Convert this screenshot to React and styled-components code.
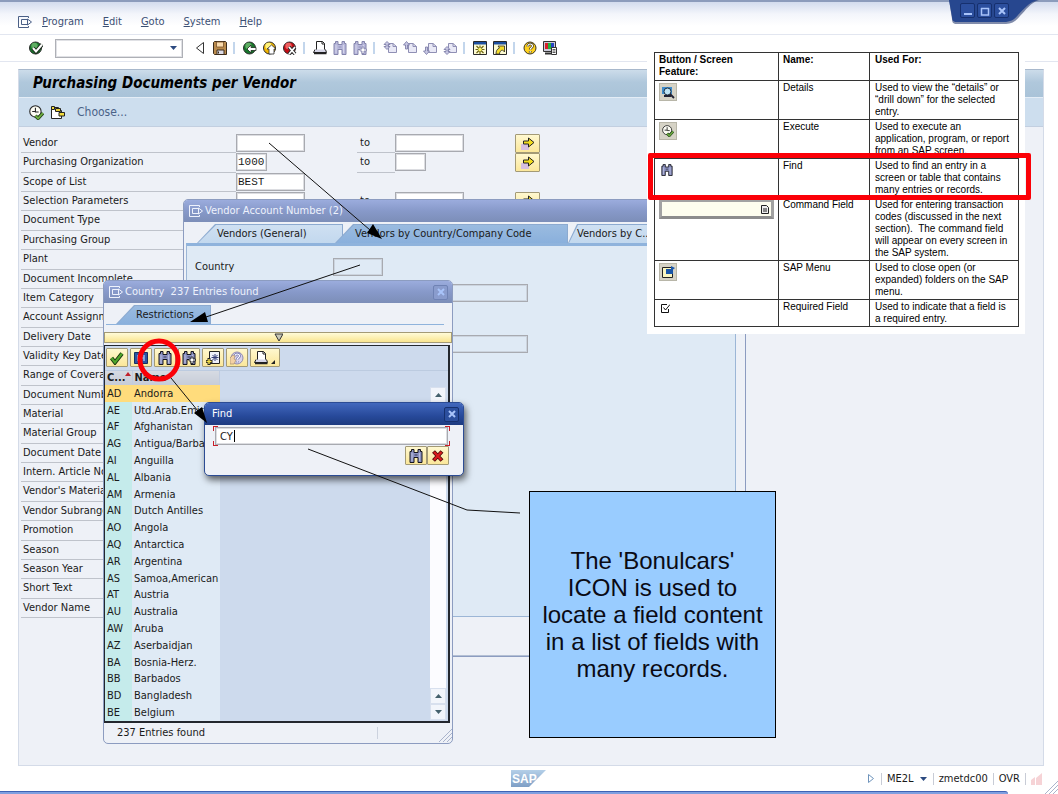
import React from "react";
import styled, { createGlobalStyle, css } from "styled-components";

const GlobalStyle = createGlobalStyle`
  * {
    box-sizing: border-box;
  }
  body {
    margin: 0;
    background: white;
    color: #1a1a1a;
    font-family: "DejaVu Sans Condensed", "DejaVu Sans", sans-serif;
    font-size: 11px;
    line-height: 16px;
  }
  button, input, select {
    font-family: inherit;
    font-size: inherit;
    color: inherit;
  }
`

/* ---------- icons ---------- */

const Icon = ({ size = 14, children }) => (
  <svg width={size} height={size} viewBox="0 0 14 14" aria-hidden="true">{children}</svg>
)

const Binoculars = ({ fill = "#8d93c4", line = "#15151c", plus = false, size }) => (
  <Icon size={size}>
    <path d="M2.500 .5h2.500v3h4v-3h2.500v2h1.500v11h-4v-5h-4v5h-4v-11h1.500z" fill={fill} stroke={line} />
    <path d="M3 4v8M10.500 4v8" stroke="#ffffff" strokeOpacity=".4" />
    <path d="M5.500 6h3" stroke={line} strokeOpacity=".7" />
    {plus && <path d="M9 6h2v2h2.500v2H11v2.500H9V10H7V8h2z" fill="white" stroke={line} strokeWidth=".8" />}
  </Icon>
)

const Ball = ({ light, dark, children }) => (
  <Icon>
    <circle cx="6.500" cy="7" r="6" fill={dark} stroke="#2b2b2b" />
    <circle cx="5.500" cy="5" r="3.200" fill={light} />
    {children}
  </Icon>
)

const OkIcon = () => (
  <Ball light="#5fae63" dark="#16762a">
    <path d="M4 7l3 3.500 6-7" fill="none" stroke="#1c2a1c" strokeWidth="4" />
    <path d="M4 7l3 3.500 6-7" fill="none" stroke="white" strokeWidth="2" />
  </Ball>
)

const BackIcon = () => (
  <Ball light="#5fae63" dark="#16762a">
    <path d="M4 8l4-4v2.500h5v3H8V12z" fill="white" stroke="#1c2a1c" strokeWidth=".8" />
  </Ball>
)

const ExitIcon = () => (
  <Ball light="#fff27a" dark="#f0b400">
    <path d="M8.500 4l4.500 4h-2v5H6V8H4z" fill="white" stroke="#2b2b2b" strokeWidth=".8" />
  </Ball>
)

const CancelIcon = () => (
  <Ball light="#f06060" dark="#c40c14">
    <path d="M6 6l6 7M12 6l-6 7" stroke="#2b2b2b" strokeWidth="3.500" />
    <path d="M6 6l6 7M12 6l-6 7" stroke="white" strokeWidth="1.800" />
  </Ball>
)

const HelpIcon = ({ pale = false }) => (
  <Icon>
    <circle cx="7" cy="7" r="6" fill={pale ? "#d9d2ea" : "#ffd21e"} stroke={pale ? "#8f8bb0" : "#3a3320"} />
    <path d="M4.800 5.500c0-3.500 4.700-3 4.700-.4 0 1.700-2.300 1.600-2.300 3.400M7.200 10v1.500" fill="none" stroke={pale ? "#6c70b0" : "#3a3320"} strokeWidth="2.600" />
    <path d="M4.800 5.500c0-3.500 4.700-3 4.700-.4 0 1.700-2.300 1.600-2.300 3.400M7.200 10v1.500" fill="none" stroke="white" strokeWidth="1.200" />
    {pale && <path d="M0 13V7l3-3 2 1-1 3 2 1-2 4z" fill="#f3d1a6" stroke="#a58d70" strokeWidth=".7" />}
  </Icon>
)

const SaveIcon = () => (
  <Icon>
    <path d="M1.500 .5h11l1 1v12h-12l-1-1v-11z" fill="#b98a4c" stroke="#3b2c1c" />
    <path d="M3.500 1h7v5h-7z" fill="#fbdcae" stroke="#7a5228" strokeWidth=".8" />
    <path d="M4 9h7v4.500H4z" fill="#dcdce8" stroke="#3b2c1c" />
    <path d="M5.500 10.500v2" stroke="#3b2c1c" />
  </Icon>
)

const PrintIcon = ({ size }) => (
  <Icon size={size}>
    <path d="M3.500 .5h6l2 2v7h-8z" fill="white" stroke="#222" />
    <path d="M9 .5v2.500h2.500" fill="none" stroke="#222" />
    <path d="M2 8.500L.5 11.500h13L12.500 8.500" fill="#d5d5e6" stroke="#222" />
    <path d="M1 12.500h12.500" stroke="#222" strokeWidth="1.500" />
  </Icon>
)

const PageIcon = ({ arrow }) => (
  <Icon>
    <path d="M5.500 2.500h4.500l3.500 3v6h-8z" fill="#e9e9f6" stroke="#8f8fb4" />
    <path d="M10 2.500v3h3.500" fill="none" stroke="#8f8fb4" />
    <path d={arrow} fill="#c9c9e4" stroke="#8080aa" strokeWidth=".9" />
  </Icon>
)

const SessionIcon = ({ shortcut = false }) => (
  <Icon>
    <path d="M.5 .5h13v13H.5z" fill="#fdfbd2" stroke="#2a2a2a" />
    <path d="M1 1h12v2.500H1z" fill="#1d4fa0" />
    {shortcut
      ? <path d="M3 13c0-3 1-5 3.500-6L5 5h6.500v6L9.500 9C7.500 9.500 6.500 11 6.500 13z" fill="#f7de2b" stroke="#2a2a2a" strokeWidth=".8" />
      : <path d="M7 4.500v2.500M7 10v3M2.500 8.500h3M8.500 8.500h3M3.500 5l2.500 2.500M10.500 5L8 7.500M3.500 12L6 9.500M10.500 12L8 9.500" stroke="#6e6410" strokeWidth="1.200" />}
    {!shortcut && <circle cx="7" cy="8.500" r="1.600" fill="#fff650" />}
  </Icon>
)

const LayoutIcon = () => (
  <Icon>
    <path d="M.5 .5h12v10H.5z" fill="#c9c9d8" stroke="#333" />
    <path d="M2 2h3v6H2z" fill="#d8202c" />
    <path d="M5 2h3v6H5z" fill="#22b33a" />
    <path d="M8 2h3v6H8z" fill="#2745c4" />
    <path d="M2 12.500h6" stroke="#333" strokeWidth="2" />
    <path d="M8.500 6.500h5v7h-5z" fill="white" stroke="#333" />
    <path d="M9.500 8.500h3M9.500 10h3M9.500 11.500h3" stroke="#333" strokeWidth=".8" />
  </Icon>
)

const ExecuteIcon = ({ size }) => (
  <Icon size={size}>
    <circle cx="6" cy="6" r="5.300" fill="#fdfdf4" stroke="#252525" />
    <path d="M6 2.500V6.500h3M3 6h3" fill="none" stroke="#252525" />
    <path d="M6 10l2.500 2.500L13 7.500" fill="none" stroke="#26461e" strokeWidth="3.200" />
    <path d="M6 10l2.500 2.500L13 7.500" fill="none" stroke="#6fb040" strokeWidth="1.600" />
  </Icon>
)

const VariantIcon = () => (
  <Icon>
    <path d="M.5 2.500h7l3 3v8H.5z" fill="white" stroke="#222" />
    <path d="M.5 1.500h3v3h-3z" fill="#f3dc3c" stroke="#222" />
    <path d="M4.500 3.500h5v3h-5z" fill="#e8cf35" stroke="#222" />
    <path d="M8 7.500h5.500v3.500H8z" fill="#f3dc3c" stroke="#222" />
  </Icon>
)

const WindowMark = ({ color }) => (
  <Icon>
    <path d="M10.500 3V1.500h-10v11h10V11" fill="none" stroke={color} />
    <path d="M9.500 4.500h-6v5h6" fill="none" stroke={color} />
    <path d="M9.500 4v6l4-3z" fill="none" stroke={color} />
  </Icon>
)

const CheckIcon = () => (
  <Icon>
    <path d="M1.500 7l3.500 4.500 7-9" fill="none" stroke="#17330e" strokeWidth="4" />
    <path d="M1.500 7l3.500 4.500 7-9" fill="none" stroke="#4fa52c" strokeWidth="2.200" />
  </Icon>
)

const InfoPageIcon = () => (
  <Icon>
    <path d="M.5 1.500h13v11H.5z" fill="#2a55a5" stroke="#17305f" />
    <path d="M4 4v6M10 4v6M4 7h6" stroke="#9db9e6" strokeWidth="1.500" />
  </Icon>
)

const FavoriteIcon = () => (
  <Icon>
    <path d="M3.500 .5h10v12h-10z" fill="#eef0fa" stroke="#222" />
    <path d="M9 3v7M5.500 6.500h7M6.500 4l5 5M11.500 4l-5 5" stroke="#333c78" />
    <path d="M3 7v7M-.5 10.500h7" stroke="#222" strokeWidth="3" />
    <path d="M3 8v5M.5 10.500h5" stroke="#f5e04a" strokeWidth="1.400" />
  </Icon>
)

const RedCross = () => (
  <Icon>
    <path d="M2.500 2.500l8.500 9M11 2.500l-8.500 9" stroke="#4c0c0c" strokeWidth="4" />
    <path d="M3 3l7.500 8M10.500 3L3 11" stroke="#d81c1c" strokeWidth="2.400" />
  </Icon>
)

const RangeIcon = () => (
  <Icon>
    <path d="M0 7h8v6H0z" fill="#d6bfdf" />
    <path d="M2.500 4h5V1l5.500 4.500L7.500 10V7h-5z" fill="#f2dc1c" stroke="#222" />
  </Icon>
)

const DetailsIcon = () => (
  <Icon>
    <path d="M1 2h10v7H1z" fill="#3f8ccc" />
    <circle cx="6.500" cy="6.500" r="3.500" fill="#bfe4f5" stroke="#234" />
    <path d="M3 11h7M9 9l4 4" stroke="#223" strokeWidth="1.800" />
  </Icon>
)

const SapMenuIcon = () => (
  <Icon>
    <path d="M1.500 2.500h10v10h-10z" fill="#fbf6c0" stroke="#222" />
    <path d="M5 4h7v5H5z" fill="#1a56a8" />
    <path d="M10 1l4 2-4 3z" fill="#1a56a8" />
  </Icon>
)

const Triangle = ({ d, color = "#2c4a80", fill }) => (
  <svg width="9" height="10" viewBox="0 0 9 10" aria-hidden="true">
    <path d={d} fill={fill || color} stroke={fill ? color : "none"} />
  </svg>
)

const down = "M1 3h7L4.500 7z"
const up = "M1 7h7L4.500 3z"

const Grip = () => (
  <svg width="13" height="13" viewBox="0 0 13 13" aria-hidden="true">
    <path d="M0 13L13 0M4 13l9-9M8 13l5-5" stroke="#aab4cc" />
  </svg>
)

/* ---------- main window ---------- */

const Screen = styled.div`
  position: relative;
  display: flex;
  flex-direction: column;
  min-height: 100vh;
  overflow: hidden;
`

const MenuBar = styled.nav`
  display: flex;
  align-items: center;
  gap: 19px;
  height: 35px;
  padding: 8px 18px 0;
  border-top: 2px solid #8c9cbc;
  border-bottom: 1px solid #e2e6f0;
  background: linear-gradient(#d3dcee, #f3f5fb 12px, white 24px);
`

const MenuItem = styled.button`
  padding: 0;
  border: 0;
  background: none;
  color: #3c5074;
  line-height: 16px;
  &::first-letter {
    text-decoration: underline;
  }
`

const MenuMark = styled.span`
  display: flex;
  margin-right: -9px;
`

const Toolbar = styled.div`
  display: flex;
  align-items: center;
  gap: 6px;
  height: 27px;
  padding: 0 29px;
  border-bottom: 1px solid #e2e6f0;
`

const ToolButton = styled.button`
  display: flex;
  padding: 0;
  border: 0;
  background: none;
`

const Separator = styled.span`
  width: 4px;
  height: 12px;
  border-left: 2px solid #c3d6ec;
`

const Command = styled.label`
  position: relative;
  margin: 0 4px 0 6px;
  svg {
    position: absolute;
    right: 5px;
    top: 4px;
    pointer-events: none;
  }
`

const CommandSelect = styled.select`
  display: block;
  appearance: none;
  width: 128px;
  height: 19px;
  padding: 0 4px;
  border: 1px solid #aeb0b6;
  border-radius: 0;
  background: white;
  box-shadow: inset 0 0 0 1px #e0e1e5;
`

const Body = styled.main`
  display: flex;
  flex-direction: column;
  flex: 1;
  margin: 7px 14px 0 18px;
  border: 1px solid #d4dbe8;
  border-top-color: #a8b8cc;
  background: #eef1f7;
`

const Title = styled.h1`
  margin: 0;
  padding: 0 14px;
  border-bottom: 1px solid #e4edf6;
  background: linear-gradient(#ccdcea, #b0c8dc 45%, #a9c3d8);
  color: black;
  font-size: 15px;
  font-style: italic;
  line-height: 27px;
`

const AppBar = styled.div`
  display: flex;
  align-items: center;
  gap: 7px;
  height: 29px;
  padding: 0 10px;
  border-bottom: 1px solid #c2cfe0;
  background: #cddeee;
`

const TextButton = styled.button`
  padding: 0 5px;
  border: 0;
  background: none;
  color: #4a6288;
  font-size: 12px;
`

const Form = styled.form`
  display: grid;
  grid-auto-rows: 1fr;
  min-height: 484px;
  margin: 7px 2px;
`

const FormRow = styled.div`
  display: grid;
  grid-template-columns: 215px 121px 38px 120px 25px;
`

const FormLabel = styled.label`
  padding: 1px ${props => props.$inset || "2px"} 0;
  border-bottom: 1px solid #bfc3cb;
  white-space: nowrap;
`

const Field = styled.input`
  width: ${props => props.$width || "69px"};
  height: 18px;
  padding: 0 ${props => props.$pad || "1px"};
  border: 1px solid #a8aab0;
  border-radius: 0;
  background: ${props => props.$flat ? "transparent" : "white"};
  box-shadow: inset 0 0 0 1px ${props => props.$flat ? "#ccd4de" : "#dcdde1"};
  font-family: "Liberation Mono", monospace;
  outline: none;
`

const YellowButton = styled.button`
  display: flex;
  align-items: center;
  justify-content: center;
  width: ${props => props.$width || "22px"};
  height: 19px;
  padding: 0;
  border: 1px solid #a39a76;
  border-radius: 1px;
  background: linear-gradient(#fff8cf, #fbe79a);
`

const StatusBar = styled.footer`
  display: grid;
  grid-template-columns: 1fr auto 1fr;
  align-items: center;
  height: 25px;
  padding: 0 16px;
`

const StatusItems = styled.div`
  display: flex;
  justify-content: flex-end;
  align-items: center;
  gap: 5px;
`

const StatusSeparator = styled.span`
  height: 12px;
  border-left: 1px solid #c8ccd6;
`

const BottomEdge = styled.div`
  height: 3px;
  margin-right: 50px;
  border-top: 1px solid #3f63b4;
  border-top-right-radius: 8px;
  background: #7f9fe0;
`

const CornerGrip = styled.div`
  position: absolute;
  right: 0;
  bottom: 0;
  display: flex;
`

const WindowControls = styled.div`
  position: absolute;
  top: 0;
  right: 18px;
  display: flex;
  gap: 2px;
  padding: 3px 31px 8px 11px;
  > svg {
    position: absolute;
    top: 0;
    left: 0;
  }
`

const TitleButton = styled.button`
  position: relative;
  display: flex;
  align-items: center;
  justify-content: center;
  width: 15px;
  height: 15px;
  padding: 0;
  border: 1px solid ${props => props.$pale ? "#6f82b4" : "#16306e"};
  border-radius: 2px;
  background: ${props => props.$pale ? "#8a9ccd" : "#2c4f9e"};
`

const glyphs = {
  min: "M1 8h8",
  max: "M1 2.500h8M1.500 2v7h7V2",
  close: "M2 2l6 6M8 2l-6 6",
}

const Glyph = ({ name }) => (
  <svg width="10" height="10" viewBox="0 0 10 10" aria-hidden="true">
    <path d={glyphs[name]} fill="none" stroke="#a9c4fa" strokeWidth={name === "max" ? 1.5 : 2} />
  </svg>
)

/* ---------- dialogs ---------- */

const Dialog = styled.section`
  position: absolute;
  left: ${props => props.$left}px;
  top: ${props => props.$top}px;
  width: ${props => props.$width}px;
  display: flex;
  flex-direction: column;
  border: 1px solid ${props => props.$active ? "#2c4c94" : "#8c9cc0"};
  border-radius: 5px;
  background: #eef1f7;
  ${props => props.$active && css`
    box-shadow: 2px 4px 7px rgba(0, 0, 0, 0.6);
  `}
`

const DialogTitle = styled.header`
  display: flex;
  align-items: center;
  gap: 2px;
  height: 22px;
  padding: 0 4px 0 5px;
  border-radius: 4px 4px 0 0;
  background: ${props => props.$active
    ? "linear-gradient(#4268bd, #27499a 60%, #1d3b80)"
    : "linear-gradient(#9bacdd, #8799c9 50%, #7c8eb8)"};
  color: ${props => props.$active ? "white" : "#eef2fc"};
`

const DialogName = styled.h2`
  flex: 1;
  margin: 0;
  padding-left: ${props => props.$indent ? "2px" : "0"};
  font-size: 11px;
  font-weight: normal;
  white-space: pre;
`

const Tabs = styled.div`
  display: flex;
  height: 19px;
  margin: ${props => props.$margin};
`

const Tab = styled.button`
  position: relative;
  isolation: isolate;
  width: ${props => props.$width}px;
  margin-left: ${props => props.$overlap ? "-8px" : "0"};
  padding: 0 0 0 20px;
  border: 0;
  background: none;
  text-align: left;
  white-space: nowrap;
  &::before, &::after {
    content: "";
    position: absolute;
    z-index: -1;
    inset: 0;
    clip-path: polygon(18px 0, 100% 0, 100% 100%, 0 100%);
    background: #8caad0;
  }
  &::after {
    inset: 1px 1px 0 1px;
    background: ${props => props.$active
      ? "linear-gradient(#9abbe0, #8ab0dc)"
      : "linear-gradient(#cfe0f2, #c2d8ee)"};
  }
`

const LastTab = styled(Tab)`
  padding-left: 9px;
  &::before, &::after {
    clip-path: polygon(9px 0, 100% 0, 100% 100%, 0 100%);
  }
`

const VendorPanel = styled.div`
  display: grid;
  align-content: start;
  gap: 33px;
  height: 374px;
  margin: 0 9px 38px 2px;
  padding: 12px 8px;
  border: 1px solid #9cb6d6;
  border-top: 3px solid #8fb3dc;
  background: #dfeaf5;
`

const PanelRow = styled.div`
  display: flex;
  align-items: center;
  height: 18px;
  label {
    width: 138px;
  }
`

const PanelStack = styled.div`
  display: grid;
  justify-items: start;
  gap: 8px;
`

const WindowFoot = styled.div`
  border-top: 1px solid #b4c0d4;
`

const Rule = styled.div`
  height: 8px;
  margin: 0 8px 0 2px;
  border-top: 1px solid #8fb3dc;
`

const FilterBar = styled.button`
  display: flex;
  align-items: center;
  justify-content: center;
  height: 11px;
  padding: 0;
  border: 1px solid #a39a76;
  background: linear-gradient(#fffbd8, #fae58f);
`

const HitList = styled.div`
  margin: 2px 2px 0 0;
  border: 2px solid #23272e;
  border-width: 1px 2px 2px 1px;
  background: #cddaed;
`

const ListTools = styled.div`
  display: flex;
  gap: 2px;
  height: 24px;
  padding: 2px 1px;
`

const ListArea = styled.div`
  display: flex;
  justify-content: space-between;
  border-top: 1px solid #bccbe0;
`

const CountryTable = styled.table`
  width: 115px;
  height: 350px;
  border-collapse: collapse;
  table-layout: fixed;
`

const HeadCell = styled.th`
  position: relative;
  width: ${props => props.$width};
  padding: 0 2px;
  background: linear-gradient(#d6dae2, #c6ccd8);
  text-align: left;
  line-height: 14px;
  border-right: 1px solid #c0cce0;
`

const SortMark = styled.svg`
  position: absolute;
  top: 1px;
  right: 1px;
`

const Cell = styled.td`
  padding: 0 0 0 2px;
  background: ${props => props.$selected ? "#ffdc7c" : props.$code ? "#c5ebeb" : "#dfeaf5"};
  line-height: 15px;
  white-space: nowrap;
`

const ScrollBar = styled.div`
  display: flex;
  flex-direction: column;
  width: 16px;
  margin: 16px 2px 1px 0;
  background: #fcfcff;
`

const ScrollButton = styled.button`
  display: flex;
  align-items: center;
  justify-content: center;
  height: 16px;
  padding: 0;
  border: 1px solid #d8e0ee;
  background: #f2f5fb;
  margin-top: ${props => props.$push ? "auto" : "0"};
`

const ListStatus = styled.footer`
  display: flex;
  align-items: center;
  height: 20px;
  padding-left: 13px;
  span {
    width: 261px;
    border-right: 1px solid #ccd2de;
    line-height: 12px;
  }
  svg {
    margin: 4px 0 0 auto;
  }
`

const FindBody = styled.form`
  display: flex;
  flex-direction: column;
  padding: 1px 13px 10px 8px;
`

const corner = (x, y) => `linear-gradient(#c81e28, #c81e28) ${x} ${y}`

const FindField = styled.div`
  position: relative;
  padding: 1px 2px;
  background:
    ${corner("left", "top")} / 5px 1px, ${corner("left", "top")} / 1px 5px,
    ${corner("right", "top")} / 5px 1px, ${corner("right", "top")} / 1px 5px,
    ${corner("left", "bottom")} / 5px 1px, ${corner("left", "bottom")} / 1px 5px,
    ${corner("right", "bottom")} / 5px 1px, ${corner("right", "bottom")} / 1px 5px;
  background-repeat: no-repeat;
`

const FindInput = styled(Field)`
  display: block;
  font-family: inherit;
`

const Caret = styled.span`
  position: absolute;
  left: 21px;
  top: 4px;
  width: 1px;
  height: 12px;
  background: black;
`

const FindActions = styled.div`
  display: flex;
  justify-content: flex-end;
  padding-right: 1px;
`

/* ---------- annotations ---------- */

const Guide = styled.aside`
  position: absolute;
  left: 647px;
  top: 48px;
  width: 378px;
  padding: 4px 6px 7px 7px;
  background: white;
`

const GuideTable = styled.table`
  width: 100%;
  border-collapse: collapse;
  table-layout: fixed;
  color: black;
  font-family: "Liberation Sans", sans-serif;
  font-size: 10px;
  line-height: 12px;
  th, td {
    padding: 1px 4px 0 5px;
    border: 1px solid #333;
    text-align: left;
    vertical-align: top;
    white-space: pre;
  }
  th:nth-child(1) { width: 124px; }
  th:nth-child(2) { width: 91px; }
  td:nth-child(1), th:nth-child(1), td:nth-child(2), th:nth-child(2) {
    padding-left: 4px;
  }
`

const GuideRow = styled.tr`
  height: ${props => props.$height}px;
  td > div {
    max-height: ${props => props.$height - 2}px;
    overflow: hidden;
  }
`

const Chip = styled.span`
  display: flex;
  align-items: center;
  justify-content: center;
  width: ${props => props.$plain ? "16px" : "18px"};
  height: 18px;
  margin-top: 1px;
  border: ${props => props.$plain ? "0" : "1px solid #b8b6a8"};
  background: ${props => props.$plain ? "white" : "#d6d3c6"};
`

const Mark = styled.span`
  display: flex;
  padding: 3px 2px;
`

const CommandSample = styled.span`
  display: flex;
  justify-content: flex-end;
  align-items: center;
  width: 115px;
  height: 20px;
  padding-right: 2px;
  border: 3px solid #a2a2a2;
  border-bottom-color: #8c8c8c;
  background: #fdfdee;
`

const Highlight = styled.div`
  position: absolute;
  left: 648px;
  top: 153px;
  width: 383px;
  height: 47px;
  border: 5px solid #fb0007;
  border-radius: 2px;
`

const Note = styled.p`
  position: absolute;
  left: 529px;
  top: 491px;
  display: flex;
  align-items: center;
  width: 247px;
  height: 247px;
  margin: 0;
  padding: 0 10px;
  border: 1px solid black;
  background: #99ccff;
  color: #0a0a14;
  font-family: "Liberation Sans", sans-serif;
  font-size: 24px;
  line-height: 27px;
  text-align: center;
`

const Arrows = styled.svg`
  position: absolute;
  left: 0;
  top: 0;
  pointer-events: none;
`

const menus = ["Program", "Edit", "Goto", "System", "Help"]

const tools = [
  ["Save", <SaveIcon />],
  null,
  ["Back", <BackIcon />],
  ["Exit", <ExitIcon />],
  ["Cancel", <CancelIcon />],
  null,
  ["Print", <PrintIcon />],
  ["Find", <Binoculars fill="#b9b9dc" line="#8484ac" />],
  ["Find next", <Binoculars fill="#b9b9dc" line="#8484ac" plus />],
  null,
  ["First page", <PageIcon arrow="M4 .5l3 3H5v2h2l-3 3-3-3h2v-2H1z" />],
  ["Previous page", <PageIcon arrow="M3.500 .5l3 3.500H4.500v4h-2V4H.5z" />],
  ["Next page", <PageIcon arrow="M3.500 13.500l3-3.500H4.500V6h-2v4H.5z" />],
  ["Last page", <PageIcon arrow="M4 13.500l3-3H5v-2h2l-3-3-3 3h2v2H1z" />],
  null,
  ["New session", <SessionIcon />],
  ["Create shortcut", <SessionIcon shortcut />],
  null,
  ["Help", <HelpIcon />],
  ["Customize layout", <LayoutIcon />],
]

const selections = [
  { label: "Vendor", from: "", to: "69px" },
  { label: "Purchasing Organization", from: "1000", width: "31px", to: "31px" },
  { label: "Scope of List", from: "BEST" },
  { label: "Selection Parameters", from: "", to: "69px" },
  { label: "Document Type" },
  { label: "Purchasing Group" },
  { label: "Plant" },
  { label: "Document Incomplete" },
  { label: "Item Category" },
  { label: "Account Assignment" },
  { label: "Delivery Date" },
  { label: "Validity Key Date" },
  { label: "Range of Coverage" },
  { label: "Document Number" },
  { label: "Material" },
  { label: "Material Group" },
  { label: "Document Date" },
  { label: "Intern. Article No." },
  { label: "Vendor's Material No." },
  { label: "Vendor Subrange" },
  { label: "Promotion" },
  { label: "Season" },
  { label: "Season Year" },
  { label: "Short Text" },
  { label: "Vendor Name" },
]

const countries = [
  ["AD", "Andorra"], ["AE", "Utd.Arab.Emir."], ["AF", "Afghanistan"],
  ["AG", "Antigua/Barbads"], ["AI", "Anguilla"], ["AL", "Albania"],
  ["AM", "Armenia"], ["AN", "Dutch Antilles"], ["AO", "Angola"],
  ["AQ", "Antarctica"], ["AR", "Argentina"], ["AS", "Samoa,American"],
  ["AT", "Austria"], ["AU", "Australia"], ["AW", "Aruba"],
  ["AZ", "Aserbaidjan"], ["BA", "Bosnia-Herz."], ["BB", "Barbados"],
  ["BD", "Bangladesh"], ["BE", "Belgium"],
]

const listTools = [
  ["Copy", <CheckIcon />],
  ["Details", <InfoPageIcon />],
  ["Find", <Binoculars />],
  ["Find next", <Binoculars plus />],
  ["Add to personal list", <FavoriteIcon />],
  ["Help", <HelpIcon pale />],
]

const requiredMark = (
  <Mark>
    <svg width="9" height="9" viewBox="0 0 9 9" aria-hidden="true">
      <path d="M6 .5H.5v8h7V5M2.500 3.500l2 2.500L9 .5" fill="none" stroke="#111" />
    </svg>
  </Mark>
)

const commandSample = (
  <CommandSample>
    <svg width="8" height="9" viewBox="0 0 8 9" aria-hidden="true">
      <path d="M.5 .5h5l2 2v6h-7z" fill="#eee" stroke="#222" />
      <path d="M2 4h4M2 6h4" stroke="#222" />
    </svg>
  </CommandSample>
)

const guide = [
  [39, <Chip><DetailsIcon /></Chip>, "Details", "Used to view the “details” or\n“drill down” for the selected\nentry."],
  [39, <Chip><ExecuteIcon size={12} /></Chip>, "Execute", "Used to execute an\napplication, program, or report\nfrom an SAP screen."],
  [39, <Chip $plain><Binoculars size={12} /></Chip>, "Find", "Used to find an entry in a\nscreen or table that contains\nmany entries or records."],
  [63, commandSample, "Command Field", "Used for entering transaction\ncodes (discussed in the next\nsection).  The command field\nwill appear on every screen in\nthe SAP system."],
  [39, <Chip><SapMenuIcon /></Chip>, "SAP Menu", "Used to close open (or\nexpanded) folders on the SAP\nmenu."],
  [27, requiredMark, "Required Field", "Used to indicate that a field is\na required entry."],
]

const SelectionForm = () => (
  <Form>
    {selections.map((row, index) => (
      <FormRow key={row.label}>
        <FormLabel htmlFor={`from-${index}`}>{row.label}</FormLabel>
        {row.from !== undefined && (
          <Field id={`from-${index}`} $width={row.width} defaultValue={row.from} />
        )}
        {row.to && (
          <>
            <FormLabel $inset="3px" htmlFor={`to-${index}`}>to</FormLabel>
            <Field id={`to-${index}`} $width={row.to} />
            <YellowButton $width="25px" type="button" aria-label="Multiple selection">
              <RangeIcon />
            </YellowButton>
          </>
        )}
      </FormRow>
    ))}
  </Form>
)

const VendorDialog = () => (
  <Dialog $left={183} $top={199} $width={563}>
    <DialogTitle>
      <WindowMark color="#eef2fc" />
      <DialogName>Vendor Account Number (2)</DialogName>
    </DialogTitle>
    <Tabs $margin="2px 9px 0 13px">
      <Tab $width={146}>Vendors (General)</Tab>
      <Tab $width={233} $overlap $active>Vendors by Country/Company Code</Tab>
      <LastTab $width={168}>Vendors by C...</LastTab>
    </Tabs>
    <VendorPanel>
      <PanelStack>
        <PanelRow>
          <label htmlFor="country">Country</label>
          <Field id="country" $width="50px" $flat />
        </PanelRow>
        <Field aria-label="Company code" $width="333px" $flat />
      </PanelStack>
      <Field aria-label="Search term" $width="333px" $flat />
    </VendorPanel>
    <WindowFoot />
  </Dialog>
)

const CountryDialog = () => (
  <Dialog $left={103} $top={280} $width={350}>
    <DialogTitle>
      <WindowMark color="#eef2fc" />
      <DialogName>Country  237 Entries found</DialogName>
      <TitleButton $pale aria-label="Close"><Glyph name="close" /></TitleButton>
    </DialogTitle>
    <Tabs $margin="2px 0 0 12px">
      <Tab $width={95} $active>Restrictions</Tab>
    </Tabs>
    <Rule />
    <FilterBar aria-label="Hide restrictions">
      <Triangle d="M1 1h8L5 8z" color="#333" fill="#c8c8b8" />
    </FilterBar>
    <HitList>
      <ListTools>
        {listTools.map(([name, icon]) => (
          <YellowButton key={name} aria-label={name}>{icon}</YellowButton>
        ))}
        <YellowButton $width="30px" aria-label="Print">
          <PrintIcon />
          <svg width="8" height="14" viewBox="0 0 8 14" aria-hidden="true">
            <path d="M7 9v4H3z" fill="#222" />
          </svg>
        </YellowButton>
      </ListTools>
      <ListArea>
        <CountryTable>
          <thead>
            <tr>
              <HeadCell $width="27px">
                C...
                <SortMark width="6" height="4" viewBox="0 0 6 4"><path d="M0 4h6L3 0z" fill="#c0202c" /></SortMark>
              </HeadCell>
              <HeadCell>Name</HeadCell>
            </tr>
          </thead>
          <tbody>
            {countries.map(([code, name], index) => (
              <tr key={code}>
                <Cell $code $selected={index === 0}>{code}</Cell>
                <Cell $selected={index === 0}>{name}</Cell>
              </tr>
            ))}
          </tbody>
        </CountryTable>
        <ScrollBar>
          <ScrollButton aria-label="Page up"><Triangle d={up} color="#44606c" /></ScrollButton>
          <ScrollButton $push aria-label="Up"><Triangle d={up} color="#44606c" /></ScrollButton>
          <ScrollButton aria-label="Down"><Triangle d={down} color="#44606c" /></ScrollButton>
        </ScrollBar>
      </ListArea>
    </HitList>
    <ListStatus>
      <span>237 Entries found</span>
      <Grip />
    </ListStatus>
  </Dialog>
)

const FindDialog = () => (
  <Dialog $left={204} $top={402} $width={260} $active>
    <DialogTitle $active>
      <DialogName $indent>Find</DialogName>
      <TitleButton aria-label="Close"><Glyph name="close" /></TitleButton>
    </DialogTitle>
    <FindBody>
      <FindField>
        <FindInput aria-label="Find" $width="100%" $pad="4px" defaultValue="CY" />
        <Caret />
      </FindField>
      <FindActions>
        <YellowButton type="button" aria-label="Find"><Binoculars /></YellowButton>
        <YellowButton type="button" aria-label="Cancel"><RedCross /></YellowButton>
      </FindActions>
    </FindBody>
  </Dialog>
)

const App = () => (
  <Screen>
    <GlobalStyle />
    <MenuBar>
      <MenuMark><WindowMark color="#4a5f86" /></MenuMark>
      {menus.map(name => <MenuItem key={name}>{name}</MenuItem>)}
    </MenuBar>
    <WindowControls>
      <svg width="90" height="26" viewBox="0 0 90 26" aria-hidden="true">
        <path d="M0 0h90c-9 3-13 10-19 16-4 5-8 8-14 8H8c-4 0-5-2-5-5z" fill="#1c2f66" fillOpacity=".55" />
        <path d="M0 0h88c-9 3-13 9-19 15-4 5-8 7-14 7H8c-4 0-5-2-5-5z" fill="#27478f" />
      </svg>
      <TitleButton aria-label="Minimize"><Glyph name="min" /></TitleButton>
      <TitleButton aria-label="Maximize"><Glyph name="max" /></TitleButton>
      <TitleButton aria-label="Close"><Glyph name="close" /></TitleButton>
    </WindowControls>
    <Toolbar>
      <ToolButton aria-label="Enter"><OkIcon /></ToolButton>
      <Command>
        <CommandSelect aria-label="Command" />
        <Triangle d={down} />
      </Command>
      <ToolButton aria-label="Hide command field">
        <Icon><path d="M10.500 1.500v11L3.500 7z" fill="white" stroke="#333" /></Icon>
      </ToolButton>
      {tools.map((tool, index) => tool
        ? <ToolButton key={index} aria-label={tool[0]}>{tool[1]}</ToolButton>
        : <Separator key={index} />
      )}
    </Toolbar>
    <Body>
      <Title>Purchasing Documents per Vendor</Title>
      <AppBar>
        <ToolButton aria-label="Execute"><ExecuteIcon size={15} /></ToolButton>
        <ToolButton aria-label="Get variant"><VariantIcon /></ToolButton>
        <TextButton>Choose...</TextButton>
      </AppBar>
      <SelectionForm />
    </Body>
    <StatusBar>
      <span />
      <svg width="36" height="17" viewBox="0 0 36 17" role="img" aria-label="SAP">
        <defs>
          <linearGradient id="sap" x1="0" y1="0" x2="0" y2="1">
            <stop offset="0" stopColor="#b4cfe8" />
            <stop offset="1" stopColor="#7e9fc6" />
          </linearGradient>
        </defs>
        <path d="M0 0h35L18 17H0z" fill="url(#sap)" />
        <text x="1" y="13" fill="white" fontFamily="Liberation Sans, sans-serif" fontSize="12" fontWeight="bold">SAP</text>
      </svg>
      <StatusItems>
        <Triangle d="M1.500 .5v8l5-4z" color="#6f94bc" fill="white" />
        <StatusSeparator />
        <span>ME2L</span>
        <Triangle d={down} />
        <StatusSeparator />
        <span>zmetdc00</span>
        <StatusSeparator />
        <span>OVR</span>
        <StatusSeparator />
        <svg width="11" height="12" viewBox="0 0 11 12" aria-hidden="true">
          <path d="M0 12V7l4-3v8zM5 12V5l6-5v12z" fill="#f6d3d6" />
        </svg>
      </StatusItems>
    </StatusBar>
    <BottomEdge />
    <CornerGrip><Grip /></CornerGrip>

    <VendorDialog />
    <CountryDialog />
    <FindDialog />

    <Guide>
      <GuideTable>
        <thead>
          <GuideRow $height={28}>
            <th>{"Button / Screen\nFeature:"}</th>
            <th>Name:</th>
            <th>Used For:</th>
          </GuideRow>
        </thead>
        <tbody>
          {guide.map(([height, icon, name, use]) => (
            <GuideRow key={name} $height={height}>
              <td><div>{icon}</div></td>
              <td>{name}</td>
              <td><div>{use}</div></td>
            </GuideRow>
          ))}
        </tbody>
      </GuideTable>
    </Guide>
    <Highlight />
    <Note>The 'Bonulcars' ICON is used to locate a field content in a list of fields with many records.</Note>
    <Arrows width="1058" height="794" viewBox="0 0 1058 794" aria-hidden="true">
      <g fill="none" stroke="#111">
        <path d="M269 143L370 230M360 265L206 317M171 378L198 411" />
        <path d="M308 449l159 61 53 3" />
        <circle cx="159" cy="360" r="19" stroke="#fb0007" strokeWidth="5" />
      </g>
      <path d="M382 239l-15-6 6-9zM190 322l15-10 3 10zM207 423l-13-10 8-6z" fill="black" />
    </Arrows>
  </Screen>
)

export default App;
